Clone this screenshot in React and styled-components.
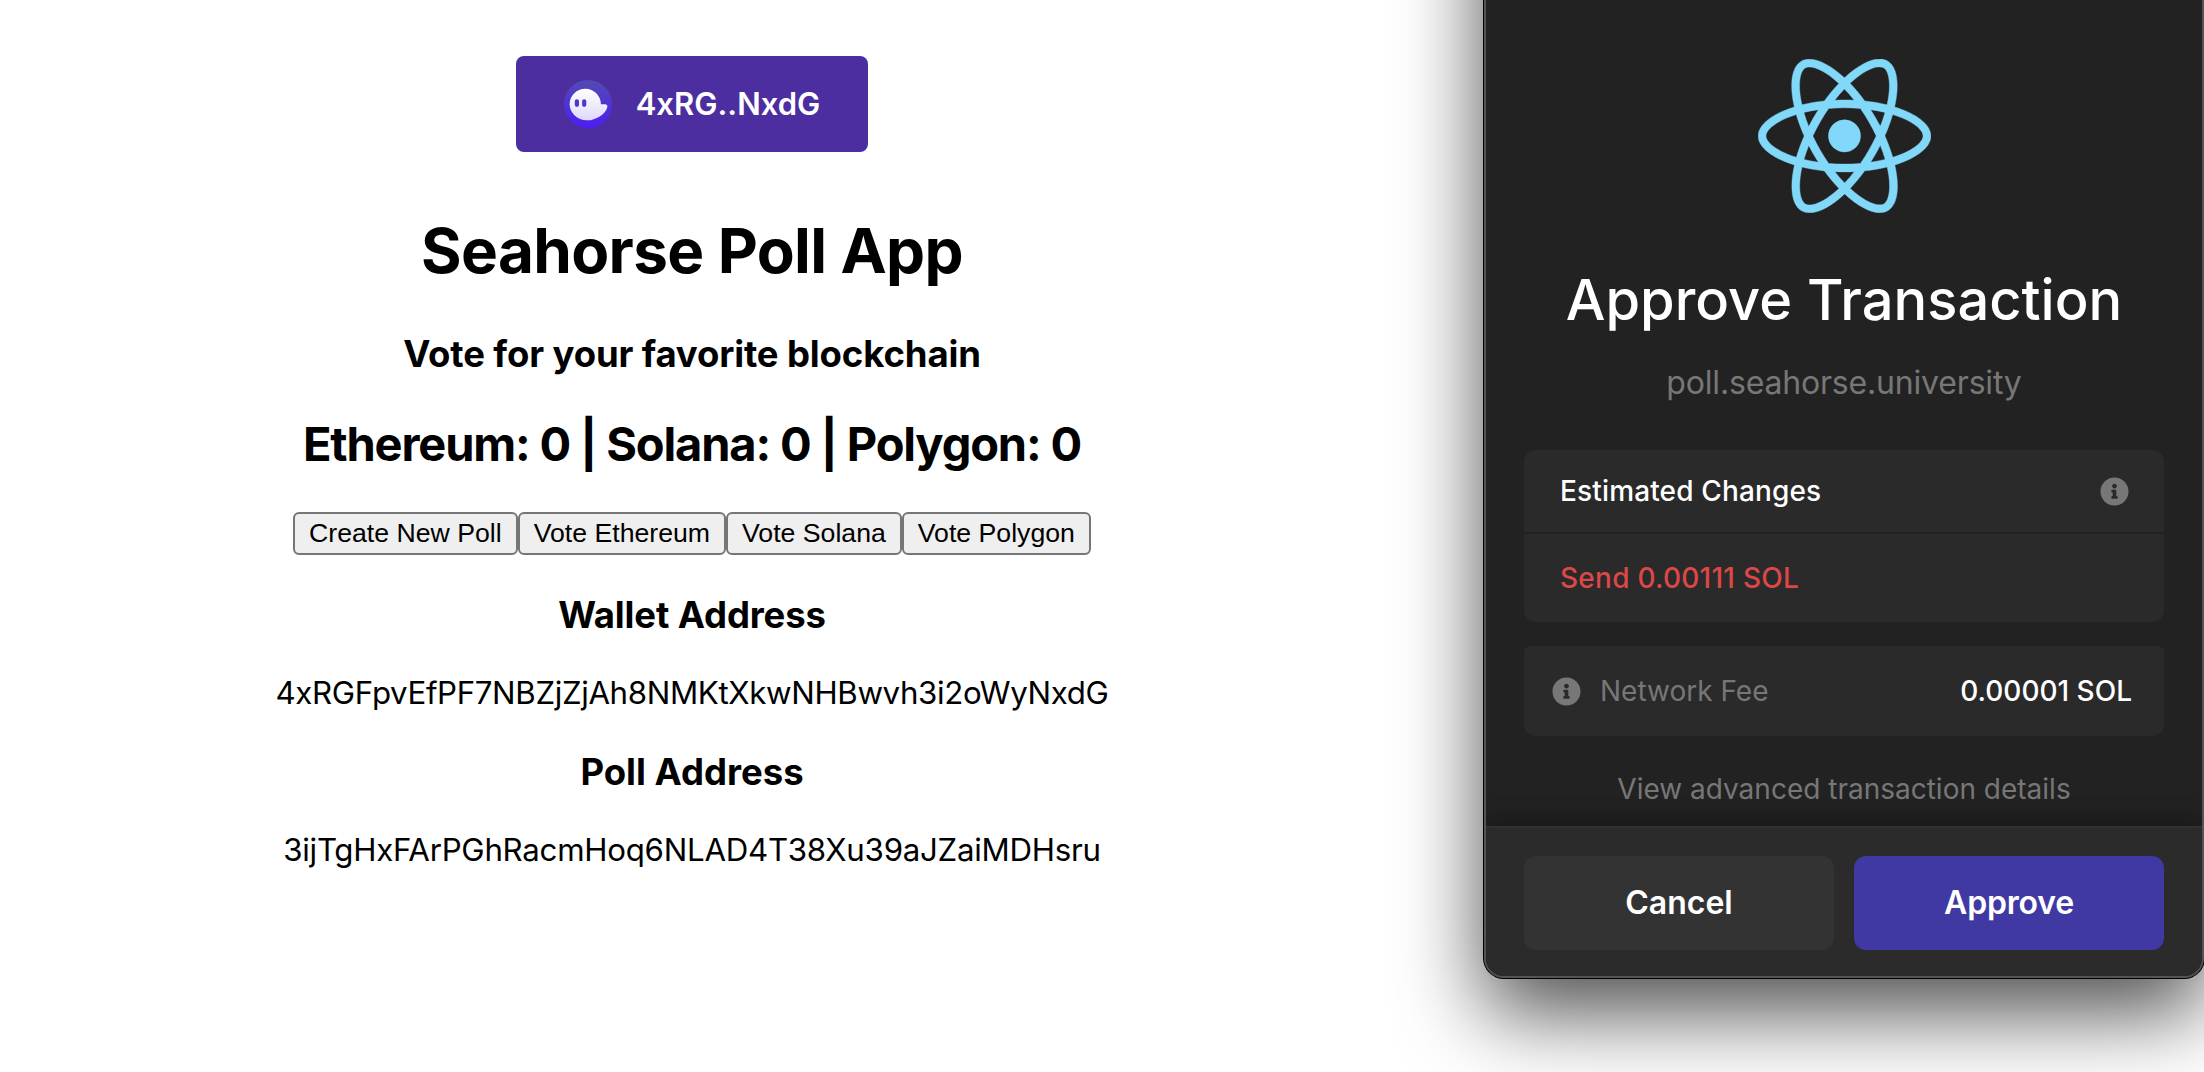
import React from "react";
import styled, { createGlobalStyle } from "styled-components";
import { FaInfoCircle } from "react-icons/fa";

const GlobalStyle = createGlobalStyle`
  * { box-sizing: border-box; }
  html, body { margin: 0; height: 100%; background: #fff; overflow: hidden; }
  body { font-family: Inter, "Liberation Sans", sans-serif; color: #000; }
  h1, h2, h3, p { margin: 0; }
  button { font-family: inherit; cursor: pointer; }
`;

const Screen = styled.div`
  display: flex;
  align-items: flex-start;
  width: 2204px;
  height: 1072px;
  overflow: hidden;
`;

/* Poll page */
const Page = styled.main`
  flex: 0 0 1384px;
  padding-top: 56px;
  display: flex;
  flex-direction: column;
  align-items: center;
  text-align: center;
`;

const WalletButton = styled.button`
  display: flex;
  align-items: center;
  gap: 24px;
  height: 96px;
  padding: 0 48px;
  border: 0;
  border-radius: 8px;
  background: #4c2ea0;
  color: #fff;
  font-size: 31px;
  font-weight: 600;
  white-space: nowrap;
  svg { width: 48px; height: 48px; display: block; }
`;

const WalletLabel = styled.span`
  padding-bottom: 2px;
`;

const Title = styled.h1`
  margin-top: 61px;
  font-size: 62px;
  line-height: 76px;
  font-weight: 700;
  letter-spacing: -0.636px;
`;

const Subtitle = styled.h3`
  margin-top: ${(p) => p.$gap}px;
  font-size: 36.5px;
  line-height: 44px;
  font-weight: 700;
  letter-spacing: ${(p) => p.$spacing || 0}px;
`;

const Tally = styled.h2`
  margin-top: 39px;
  font-size: 47px;
  line-height: 58px;
  font-weight: 700;
  letter-spacing: -1.16px;
`;

const Actions = styled.div`
  display: flex;
  margin-top: 39px;
`;

const ActionButton = styled.button`
  height: 43px;
  padding: 0 14px 1px;
  border: 2px solid #767676;
  border-radius: 6px;
  background: #efefef;
  color: #000;
  font: 26.667px/38px "Liberation Sans", sans-serif;
  white-space: nowrap;
`;

const Address = styled.p`
  margin-top: 37px;
  font-size: 31.25px;
  line-height: 38px;
  letter-spacing: ${(p) => p.$spacing}px;
`;

/* Wallet popup window */
const Popup = styled.section`
  flex: 0 0 720px;
  margin: -300px 0 0 100px;
  padding-top: 300px;
  height: 1278px;
  display: flex;
  flex-direction: column;
  border: 2px solid #545454;
  border-top: 0;
  border-radius: 0 0 20px 20px;
  background: #222;
  color: #fff;
  box-shadow: 0 0 0 1px #000, 0 34px 84px rgba(0, 0, 0, 0.7);
`;

const PopupBody = styled.div`
  flex: 1;
  min-height: 0;
  padding: 59px 38px 0;
  display: flex;
  flex-direction: column;
  align-items: center;
`;

const ReactLogo = styled.svg`
  width: 173px;
  height: 154px;
  fill: #82d8f9;
  stroke: #82d8f9;
  stroke-width: 1.2;
`;

const PopupTitle = styled.h1`
  margin-top: 53px;
  font-size: 56px;
  line-height: 68px;
  font-weight: 500;
`;

const Origin = styled.p`
  margin-top: 29px;
  font-size: 32px;
  line-height: 40px;
  letter-spacing: -0.179px;
  color: #777;
`;

const Card = styled.div`
  width: 100%;
  margin-top: ${(p) => p.$gap}px;
  border-radius: ${(p) => p.$radius};
  background: #2a2a2a;
`;

const Row = styled.div`
  display: flex;
  align-items: center;
  justify-content: space-between;
  height: ${(p) => p.$height}px;
  padding: ${(p) => p.$padding};
  font-size: 28px;
  line-height: 36px;
  font-weight: 500;
  letter-spacing: ${(p) => p.$spacing || 0}px;
  color: ${(p) => p.$color || "#fff"};
`;

const Divider = styled.div`
  height: 2px;
  background: #222;
`;

const FeeLabel = styled.span`
  display: flex;
  align-items: center;
  gap: 19.5px;
  font-weight: 400;
  color: #777;
`;

const InfoIcon = styled(FaInfoCircle)`
  width: 29px;
  height: 29px;
  color: #777;
`;

const DetailsLink = styled.a`
  margin-top: 35px;
  font-size: 28px;
  line-height: 36px;
  color: #777;
`;

const Footer = styled.footer`
  display: flex;
  gap: 20px;
  height: 150px;
  padding: 28px 38px 26px;
  border-top: 2px solid #323232;
  border-radius: 0 0 18px 18px;
  background: #2b2b2b;
  box-shadow: 0 -10px 20px rgba(0, 0, 0, 0.24);
  clip-path: inset(-40px 0 0 0);
`;

const FooterButton = styled.button`
  flex: 1;
  height: 94px;
  padding: 0 0 2px;
  border: 0;
  border-radius: 12px;
  background: ${(p) => (p.$primary ? "#4139a3" : "#333")};
  color: #fff;
  font-size: 32px;
  font-weight: 600;
  letter-spacing: ${(p) => (p.$primary ? -0.2 : 0)}px;
`;

function PhantomIcon() {
  return (
    <svg viewBox="0 0 34 34">
      <defs>
        <linearGradient id="disc" x1=".5" x2=".5" y1="0" y2="1">
          <stop offset="0" stopColor="#534bb1" />
          <stop offset="1" stopColor="#4c1df5" />
        </linearGradient>
        <linearGradient id="ghost" x1=".5" x2=".5" y1="0" y2="1">
          <stop offset="0" stopColor="#fff" />
          <stop offset="1" stopColor="#fff" stopOpacity=".82" />
        </linearGradient>
      </defs>
      <circle cx="17" cy="17" r="17" fill="url(#disc)" />
      <path
        fill="url(#ghost)"
        d="m29.1702 17.2071h-2.9969c0-6.1074-4.9683-11.05817-11.0968-11.05817-6.0525 0-10.97463 4.82967-11.09507 10.83237-.12461 6.2047 5.71763 11.5932 11.94538 11.5932h.7834c5.4906 0 12.8497-4.2829 13.9995-9.5013.2123-.9619-.5502-1.8661-1.5398-1.8661zm-18.5479.2721c0 .8167-.6716 1.4849-1.49252 1.4849-.82094 0-1.49241-.6683-1.49241-1.4849v-2.4015c0-.8167.67147-1.4849 1.49241-1.4849.82092 0 1.49252.6682 1.49252 1.4849zm5.1694 0c0 .8167-.6716 1.4849-1.4925 1.4849-.8209 0-1.4924-.6683-1.4924-1.4849v-2.4015c0-.8167.6715-1.4849 1.4924-1.4849.8209 0 1.4925.6682 1.4925 1.4849z"
      />
    </svg>
  );
}

function AppLogo() {
  return (
    <ReactLogo viewBox="175.5 78 490.8 437.4">
      <path d="M666.3 296.5c0-32.5-40.7-63.3-103.1-82.4 14.4-63.6 8-114.2-20.2-130.4-6.5-3.8-14.1-5.6-22.4-5.6v22.3c4.6 0 8.3.9 11.4 2.6 13.6 7.8 19.5 37.5 14.9 75.7-1.1 9.4-2.9 19.3-5.1 29.4-19.6-4.8-41-8.5-63.5-10.9-13.5-18.5-27.5-35.3-41.6-50 32.6-30.3 63.2-46.9 84-46.9V78c-27.5 0-63.5 19.6-99.9 53.6-36.4-33.8-72.4-53.2-99.9-53.2v22.3c20.7 0 51.4 16.5 84 46.6-14 14.7-28 31.4-41.3 49.9-22.6 2.4-44 6.1-63.6 11-2.3-10-4-19.7-5.2-29-4.7-38.2 1.1-67.9 14.6-75.8 3-1.8 6.9-2.6 11.5-2.6V78.5c-8.4 0-16 1.8-22.6 5.6-28.1 16.2-34.4 66.7-19.9 130.1-62.2 19.2-102.7 49.9-102.7 82.3 0 32.5 40.7 63.3 103.1 82.4-14.4 63.6-8 114.2 20.2 130.4 6.5 3.8 14.1 5.6 22.5 5.6 27.5 0 63.5-19.6 99.9-53.6 36.4 33.8 72.4 53.2 99.9 53.2 8.4 0 16-1.8 22.6-5.6 28.1-16.2 34.4-66.7 19.9-130.1 62-19.1 102.5-49.9 102.5-82.3zm-130.2-66.7c-3.7 12.9-8.3 26.2-13.5 39.5-4.1-8-8.4-16-13.1-24-4.6-8-9.5-15.8-14.4-23.4 14.2 2.1 27.9 4.7 41 7.9zm-45.8 106.5c-7.8 13.5-15.8 26.3-24.1 38.2-14.9 1.3-30 2-45.2 2-15.1 0-30.2-.7-45-1.9-8.3-11.9-16.4-24.6-24.2-38-7.6-13.1-14.5-26.4-20.8-39.8 6.2-13.4 13.2-26.8 20.7-39.9 7.8-13.5 15.8-26.3 24.1-38.2 14.9-1.3 30-2 45.2-2 15.1 0 30.2.7 45 1.9 8.3 11.9 16.4 24.6 24.2 38 7.6 13.1 14.5 26.4 20.8 39.8-6.3 13.4-13.2 26.8-20.7 39.9zm32.3-13c5.4 13.4 10 26.8 13.8 39.8-13.1 3.2-26.9 5.9-41.2 8 4.9-7.7 9.8-15.6 14.4-23.7 4.6-8 8.9-16.1 13-24.1zM421.2 430c-9.3-9.6-18.6-20.3-27.8-32 9 .4 18.2.7 27.5.7 9.4 0 18.7-.2 27.8-.7-9 11.7-18.3 22.4-27.5 32zm-74.4-58.9c-14.2-2.1-27.9-4.7-41-7.9 3.7-12.9 8.3-26.2 13.5-39.5 4.1 8 8.4 16 13.1 24 4.7 8 9.5 15.8 14.4 23.4zM420.7 163c9.3 9.6 18.6 20.3 27.8 32-9-.4-18.2-.7-27.5-.7-9.4 0-18.7.2-27.8.7 9-11.7 18.3-22.4 27.5-32zm-74 58.9c-4.9 7.7-9.8 15.6-14.4 23.7-4.6 8-8.9 16-13 24-5.4-13.4-10-26.8-13.8-39.8 13.1-3.1 26.9-5.8 41.2-7.9zm-90.5 125.2c-35.4-15.1-58.3-34.9-58.3-50.6 0-15.7 22.9-35.6 58.3-50.6 8.6-3.7 18-7 27.7-10.1 5.7 19.6 13.2 40 22.5 60.9-9.2 20.8-16.6 41.1-22.2 60.6-9.9-3.1-19.3-6.5-28-10.2zM310 490c-13.6-7.8-19.5-37.5-14.9-75.7 1.1-9.4 2.9-19.3 5.1-29.4 19.6 4.8 41 8.5 63.5 10.9 13.5 18.5 27.5 35.3 41.6 50-32.6 30.3-63.2 46.9-84 46.9-4.5-.1-8.3-1-11.3-2.7zm237.2-76.2c4.7 38.2-1.1 67.9-14.6 75.8-3 1.8-6.9 2.6-11.5 2.6-20.7 0-51.4-16.5-84-46.6 14-14.7 28-31.4 41.3-49.9 22.6-2.4 44-6.1 63.6-11 2.3 10.1 4.1 19.8 5.2 29.1zm38.5-66.7c-8.6 3.7-18 7-27.7 10.1-5.7-19.6-13.2-40-22.5-60.9 9.2-20.8 16.6-41.1 22.2-60.6 9.9 3.1 19.3 6.5 28.1 10.2 35.4 15.1 58.3 34.9 58.3 50.6-.1 15.7-23 35.6-58.4 50.6z" />
      <circle cx="420.9" cy="296.5" r="45.7" />
    </ReactLogo>
  );
}

const actions = ["Create New Poll", "Vote Ethereum", "Vote Solana", "Vote Polygon"];

export default function App() {
  return (
    <Screen>
      <GlobalStyle />
      <Page>
        <WalletButton>
          <PhantomIcon />
          <WalletLabel>4xRG..NxdG</WalletLabel>
        </WalletButton>
        <Title>Seahorse Poll App</Title>
        <Subtitle $gap={43} $spacing={-0.13}>Vote for your favorite blockchain</Subtitle>
        <Tally>Ethereum: 0 | Solana: 0 | Polygon: 0</Tally>
        <Actions>
          {actions.map((label) => (
            <ActionButton key={label}>{label}</ActionButton>
          ))}
        </Actions>
        <Subtitle $gap={38} $spacing={-0.13}>Wallet Address</Subtitle>
        <Address $spacing={-0.357}>4xRGFpvEfPF7NBZjZjAh8NMKtXkwNHBwvh3i2oWyNxdG</Address>
        <Subtitle $gap={38}>Poll Address</Subtitle>
        <Address $spacing={-0.263}>3ijTgHxFArPGhRacmHoq6NLAD4T38Xu39aJZaiMDHsru</Address>
      </Page>
      <Popup>
        <PopupBody>
          <AppLogo />
          <PopupTitle>Approve Transaction</PopupTitle>
          <Origin>poll.seahorse.university</Origin>
          <Card $gap={47} $radius="12px">
            <Row $height={82} $padding="0 35.5px 0 36px" $spacing={0.15}>
              Estimated Changes
              <InfoIcon />
            </Row>
            <Divider />
            <Row $height={88} $padding="0 36px" $spacing={0.25} $color="#dc4747">
              Send 0.00111 SOL
            </Row>
          </Card>
          <Card $gap={24} $radius="6px 6px 12px 12px">
            <Row $height={90} $padding="0 32px 0 27.5px">
              <FeeLabel>
                <InfoIcon />
                Network Fee
              </FeeLabel>
              0.00001 SOL
            </Row>
          </Card>
          <DetailsLink>View advanced transaction details</DetailsLink>
        </PopupBody>
        <Footer>
          <FooterButton>Cancel</FooterButton>
          <FooterButton $primary>Approve</FooterButton>
        </Footer>
      </Popup>
    </Screen>
  );
}
